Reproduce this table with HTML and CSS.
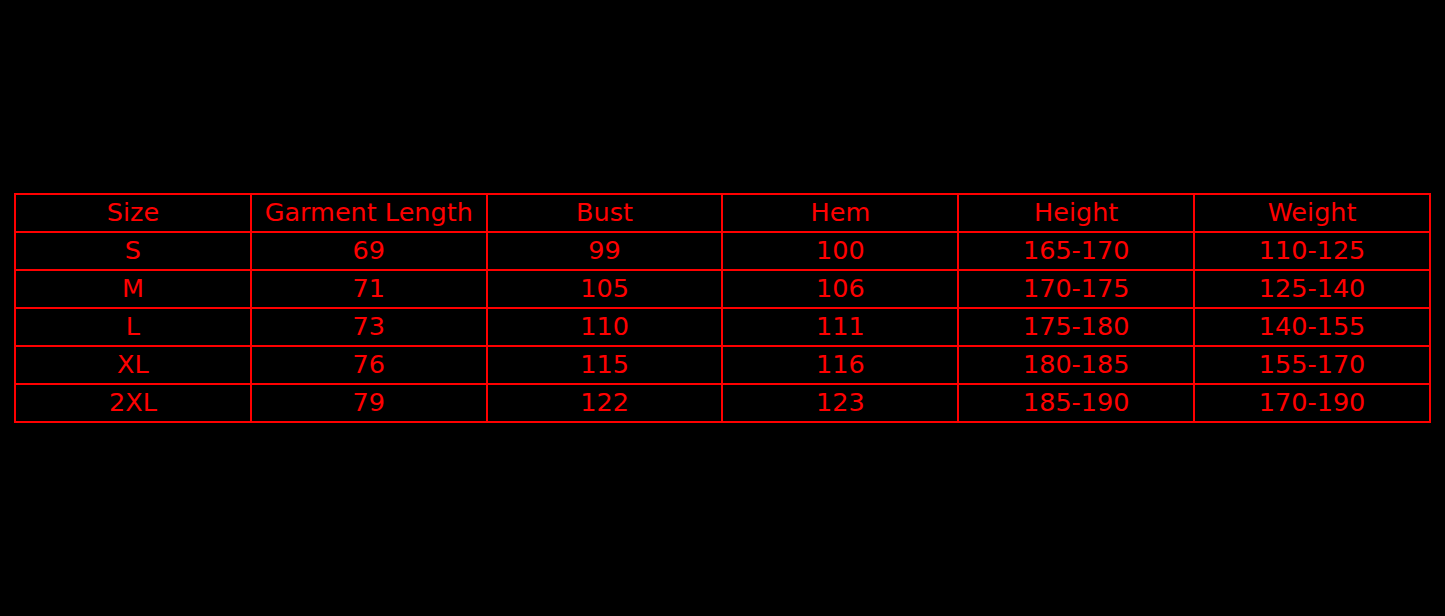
FILE: index.html
```html
<!DOCTYPE html>
<html>
<head>
<meta charset="utf-8">
<link rel="stylesheet" href="styles.css">
</head>
<body>
<div class="wrap">
<table class="size-table">
<tr><td>Size</td><td>Garment Length</td><td>Bust</td><td>Hem</td><td>Height</td><td>Weight</td></tr>
<tr><td>S</td><td>69</td><td>99</td><td>100</td><td>165-170</td><td>110-125</td></tr>
<tr><td>M</td><td>71</td><td>105</td><td>106</td><td>170-175</td><td>125-140</td></tr>
<tr><td>L</td><td>73</td><td>110</td><td>111</td><td>175-180</td><td>140-155</td></tr>
<tr><td>XL</td><td>76</td><td>115</td><td>116</td><td>180-185</td><td>155-170</td></tr>
<tr><td>2XL</td><td>79</td><td>122</td><td>123</td><td>185-190</td><td>170-190</td></tr>
</table>
</div>
</body>
</html>
```
FILE: styles.css
```css
html, body {
  margin: 0;
  background: #000;
}
.wrap {
  padding: 193px 14px 0 14px;
}
.size-table {
  width: 100%;
  border-collapse: collapse;
  table-layout: fixed;
  font-family: "DejaVu Sans", sans-serif;
  font-size: 25.5px;
  color: #ff0000;
}
.size-table td {
  border: 2px solid #ff0000;
  height: 34px;
  padding: 0 0 2px 0;
  text-align: center;
  vertical-align: middle;
  line-height: 34px;
}
```
